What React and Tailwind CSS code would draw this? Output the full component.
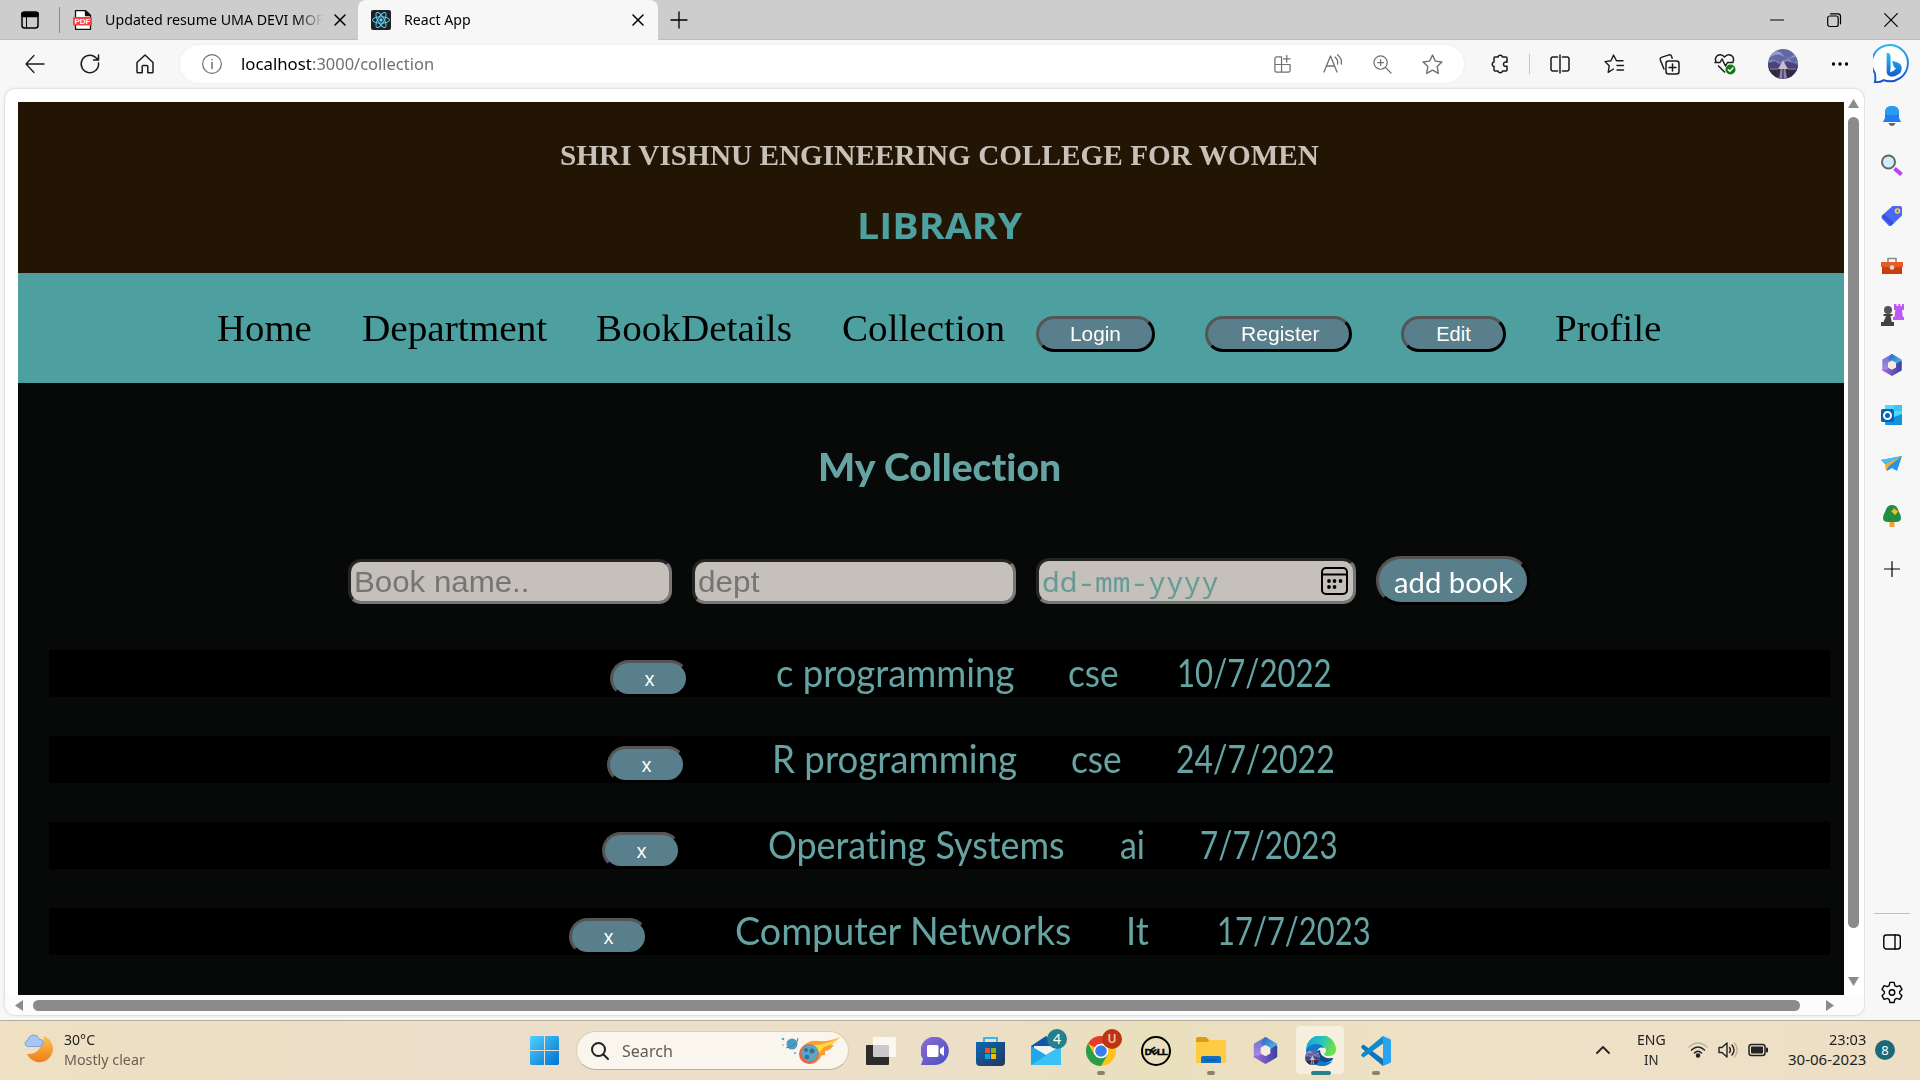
import { useLayoutEffect, useRef } from "react";

/* One line of text set to an exact measure. */
function Fit({ w, className = "", children }) {
  const ref = useRef(null);
  useLayoutEffect(() => {
    const el = ref.current;
    const natural = el.offsetWidth;
    if (natural) el.style.transform = `scaleX(${w / natural})`;
  }, [w, children]);
  return (
    <span className={"block shrink-0 whitespace-pre " + className} style={{ width: w }}>
      <span ref={ref} className="inline-block origin-left">{children}</span>
    </span>
  );
}

function Icon({ size = 24, box = 24, className = "", sw = 1.3, children }) {
  return (
    <svg width={size} height={size} viewBox={`0 0 ${box} ${box}`} fill="none" stroke="currentColor" strokeWidth={sw} strokeLinecap="round" strokeLinejoin="round" className={"block shrink-0 overflow-visible " + className}>
      {children}
    </svg>
  );
}

const seg = "font-['Noto_Sans','Open_Sans',sans-serif]";
const gill = "font-['Lato',sans-serif] [font-variant-ligatures:none]";

function CloseX() {
  return <Icon size={12} box={12} sw={1.5}><path d="M1 1l10 10M11 1L1 11" /></Icon>;
}

function TabStrip() {
  return (
    <div className={"flex h-10 items-center border-b border-[#bdbdbd] bg-[#cdcdcd] text-[15px] text-black " + seg}>
      <Icon size={20} box={20} sw={1.5} className="ml-5"><rect x="2" y="2" width="16" height="16" rx="2.5" /><path d="M2 3h16v3.5H2z" fill="currentColor" /><path d="M6.5 6v12" strokeWidth="1" /></Icon>
      <div className="ml-[19px] h-[26px] w-px bg-[#888]" />
      <Icon size={20} box={20} sw={1.3} className="ml-[13px]">
        <path d="M2.5.7h10L17.500 5.500v13.800h-15z" fill="#fff" stroke="#111" /><path d="M12.500.7V5.500h5z" fill="#111" stroke="#111" />
        <rect x="0" y="7" width="19" height="8.500" rx="1" fill="#f54242" stroke="none" />
        <text x="1.500" y="14" textLength="16" lengthAdjust="spacingAndGlyphs" fill="#fff" stroke="none" fontSize="7.500" fontWeight="700" fontFamily="Liberation Sans">PDF</text>
      </Icon>
      <div className="ml-3 w-[218px] overflow-hidden [mask-image:linear-gradient(90deg,#000_88%,transparent)]"><Fit w={218}>Updated resume UMA DEVI MOF</Fit></div>
      <div className="ml-[11px]"><CloseX /></div>
      <div className="ml-3 flex h-10 w-[300px] items-center rounded-t-lg bg-[#f7f7f7]">
        <svg width="20" height="20" viewBox="0 0 20 20" className="ml-[13px]">
          <rect width="20" height="20" rx="2" fill="#1e2227" />
          <g fill="none" stroke="#5ed3f3" strokeWidth="1"><ellipse cx="10" cy="10" rx="8.500" ry="3.200" /><ellipse cx="10" cy="10" rx="8.500" ry="3.200" transform="rotate(60 10 10)" /><ellipse cx="10" cy="10" rx="8.500" ry="3.200" transform="rotate(120 10 10)" /></g>
          <circle cx="10" cy="10" r="1.700" fill="#5ed3f3" />
        </svg>
        <Fit w={67} className="ml-[13px]">React App</Fit>
        <div className="ml-auto mr-[14px]"><CloseX /></div>
      </div>
      <Icon size={18} box={18} sw={1.3} className="ml-3"><path d="M9 1v16M1 9h16" /></Icon>
      <div className="ml-auto mr-[22px] flex items-center">
        <Icon size={14} box={14} sw={1.2}><path d="M.5 7h13" /></Icon>
        <Icon size={14} box={14} sw={1.2} className="ml-[43px]"><rect x=".7" y="3" width="10.500" height="10.500" rx="2" /><path d="M3.500.8h7.500a2.500 2.500 0 0 1 2.500 2.500v7.500" /></Icon>
        <Icon size={14} box={14} sw={1.2} className="ml-[43px]"><path d="M.7.7l12.600 12.600M13.300.7L.7 13.300" /></Icon>
      </div>
    </div>
  );
}

function Avatar({ size }) {
  return (
    <svg width={size} height={size} viewBox="0 0 30 30" className="block shrink-0">
      <defs><clipPath id={"av" + size}><circle cx="15" cy="15" r="15" /></clipPath></defs>
      <g clipPath={`url(#av${size})`}>
        <path fill="#6467a5" d="M0 0h30v30H0z" /><path fill="#9a9bc9" d="M2 5q8-6 13 1t14-3v4q-8 4-14 0T1 9z" /><path fill="#8486ba" d="M0 12q5-3 9 0t8-1 6 1 7-1v3H0z" />
        <path fill="#45467f" d="M0 14l7-2 5 4 7-4 11 4v6H0z" /><path fill="#c9bfce" d="M15 11l2 4 3 5h-10l3-5z" />
        <path fill="#322b49" d="M0 20h30v10H0z" /><path fill="#8d84a8" d="M12.500 20h5l1.500 10h-8z" /><path fill="#6f5f66" d="M2 19h8v2H2zM20 19h8v2h-8z" /><path stroke="#2c2540" d="M7 21v8M23 21v8M15 20v10" />
      </g>
    </svg>
  );
}

function Toolbar() {
  return (
    <div className="flex h-12 items-center bg-[#f7f7f7] text-[#1b1b1b]">
      <Icon size={20} box={20} className="ml-[25px]"><path d="M19 10H1M9 1.500L1 10l8 8.500" /></Icon>
      <Icon size={20} box={20} sw={1.500} className="ml-[35px]"><path d="M18.500 9A8.700 8.700 0 1 1 15.500 3.400L18.500 6M18.500 1v5h-5" /></Icon>
      <Icon size={20} box={20} sw={1.500} className="ml-[35px]"><path d="M2 8.500L10 1l8 7.500V18q0 .8-.8.800h-4.400v-6.300q0-1-1-1H8.200q-1 0-1 1v6.300H2.800Q2 18.800 2 18z" /></Icon>
      <div className="ml-[25px] flex h-[38px] w-[1284px] items-center rounded-full bg-white pl-[22px] pr-[21px] text-[#707070] shadow-[0_0_3px_#e8e8e8]">
        <Icon size={20} box={20} sw={1.200}><circle cx="10" cy="10" r="9.300" /><path d="M10 8.500v6M10 5.500v.3" strokeWidth="1.500" /></Icon>
        <div className={"ml-[19px] flex text-[17px] leading-6 " + seg}>
          <Fit w={71} className="text-black">localhost</Fit><Fit w={122}>:3000/collection</Fit>
        </div>
        <Icon size={19} box={20} className="ml-auto"><path d="M9 2H4Q2 2 2 4v12q0 2 2 2h12q2 0 2-2v-6H2M9 2v16M14.500 .5v7M11 4h7" /></Icon>
        <Icon size={20} box={20} className="ml-[31px]"><path d="M1 18L7.500 2 14 18M3.500 12h8M12 3q3.500 3 2.500 7M14.500.8q5 4 3.800 9.200" /></Icon>
        <Icon size={19} box={20} className="ml-[30px]"><circle cx="8" cy="8" r="7" /><path d="M13 13l6 6M8 5v6M5 8h6" /></Icon>
        <Icon size={21} box={20} className="ml-[30px]"><path d="M10 1l2.700 5.800 6.300.800-4.600 4.400 1.200 6.500L10 15.300 4.400 18.500l1.200-6.500L1 7.600l6.300-.8z" /></Icon>
      </div>
      <Icon size={20} box={20} sw={1.500} className="ml-[26px]"><path d="M8 3a2.300 2.300 0 0 1 4.500 0H16q1 0 1 1v4.200q-3.500-.700-3.500 2t3.500 2V16q0 1-1 1h-3.500a2.300 2.300 0 0 1-4.500 0H5q-1 0-1-1v-3.500a2.300 2.300 0 0 1 0-4.500V4q0-1 1-1z" /></Icon>
      <div className="ml-[19px] h-5 w-px bg-[#c6c6c6]" />
      <Icon size={20} box={20} sw={1.500} className="ml-5"><path d="M7.500 3H3Q1 3 1 5v10q0 2 2 2h4.500M12.500 3H17q2 0 2 2v10q0 2-2 2h-4.500M10 1v18" /></Icon>
      <Icon size={20} box={20} sw={1.400} className="ml-[34px]"><path d="M19 6.800h-6.500L9.500 1 7 6.800 1 7.600l4.200 4.200-1 6.500L9.500 15M13 11.500h6.500M13 16h6.500" /></Icon>
      <Icon size={21} box={21} sw={1.500} className="ml-[35px]"><rect x="7" y="7" width="13" height="13" rx="2.500" /><path d="M13.500 10v7M10 13.500h7M5 15L1.300 6q-.5-2 1-2.600L10 .9q2-.5 2.600 1.500l.6 1.800" /></Icon>
      <Icon size={22} box={22} sw={1.500} className="ml-[34px]"><path d="M2 9Q.3 5 3.500 2.500 7.500.3 10.500 4 13.500.3 17.500 2.500 20.700 5 19 9M1 9.500h5l2-3.500 3.500 7 2-3.500H19M4.500 13l6 6" /><circle cx="16.500" cy="16.500" r="5" fill="#107c10" stroke="none" /><path d="M14.300 16.700l1.600 1.500 3-3.300" stroke="#fff" /></Icon>
      <div className="ml-[32px]"><Avatar size={30} /></div>
      <svg width="18" height="4" className="ml-[33px]"><circle cx="2.500" cy="2" r="1.700" /><circle cx="9" cy="2" r="1.700" /><circle cx="15.500" cy="2" r="1.700" /></svg>
      <svg width="39" height="40" viewBox="0 0 40 40" className="ml-[24px]">
        <defs><linearGradient id="bg1" x1="0" y1="0" x2="0" y2="1"><stop stopColor="#2ab4f3" /><stop offset="1" stopColor="#174ec9" /></linearGradient><linearGradient id="bg2" x1="0" y1="0" x2="0" y2="1"><stop stopColor="#25c3ee" /><stop offset="1" stopColor="#1558d6" /></linearGradient></defs>
        <path d="M2 38.500q.8-3 0-9A18.500 18.500 0 1 1 11 36.500q-4 2.500-9 2z" fill="#fff" stroke="url(#bg1)" strokeWidth="2" />
        <path d="M14 8.500q4 0 4 4v12l-.5 4q3-.5 6-4l-2-1.500-2-6q8 1 9.500 5 1.500 5-2 8-4 3-8 3-5-1-5-5z" fill="url(#bg2)" />
      </svg>
    </div>
  );
}

function M365({ size }) {
  return (
    <svg width={size} height={size} viewBox="0 0 24 24" strokeWidth="2" strokeLinejoin="round">
      <defs>
        <linearGradient id="m1" x1="0" y1="0" x2="0" y2="1"><stop stopColor="#6d72cf" /><stop offset="1" stopColor="#b48be6" /></linearGradient>
        <linearGradient id="m2" x1="0" y1="0" x2="1" y2="1"><stop stopColor="#2f68c0" /><stop offset="1" stopColor="#56c6f5" /></linearGradient>
        <linearGradient id="m3" x1="0" y1="0" x2="1" y2="0"><stop stopColor="#9c6fd8" /><stop offset="1" stopColor="#3c41a5" /></linearGradient>
      </defs>
      <path d="M12 2L3.300 7v10l5 1.500V9.500l3.700-2.300z" fill="url(#m1)" stroke="url(#m1)" />
      <path d="M12 2l8.700 5v6L16 11V9.500L9.500 6z" fill="url(#m2)" stroke="url(#m2)" />
      <path d="M20.700 9v8L12 22l-8.700-5q4 1 5.500-1l3.200 1 4-2.500V12z" fill="url(#m3)" stroke="url(#m3)" />
      <path d="M12 7.500l4 2.300v4.600l-4 2.300-4-2.300V9.800z" fill="#f3ecdf" stroke="none" />
    </svg>
  );
}

function SideBar() {
  return (
    <aside className="flex w-[55px] shrink-0 flex-col items-center bg-[#f7f7f7] pt-[16px] pr-px text-black">
      <svg width="24" height="24" viewBox="0 0 24 24"><path d="M12 2q7 0 7 7v5l2 4H3l2-4V9q0-7 7-7z" fill="#1f7df0" /><path d="M12 2q7 0 7 7v2H5V9q0-7 7-7z" fill="#2a9af0" /><path d="M8.500 19h7q-1 3-3.500 3t-3.500-3z" fill="#666" /></svg>
      <svg width="24" height="24" viewBox="0 0 24 24" className="mt-[25px]"><path d="M14.500 15.500l7 6" stroke="#c03df0" strokeWidth="4" /><circle cx="8.500" cy="9" r="6.500" fill="#cdeefd" stroke="#666" strokeWidth="2" /></svg>
      <svg width="24" height="24" viewBox="0 0 24 24" className="mt-[27px]"><path d="M12.500 2H20q2 0 2 2v7.500L11.500 21.500q-1.500 1-3 0L2 14.500q-1-1.500 0-3z" fill="#4868f5" /><path d="M2 13l9 8.500 3-2.500L4 10z" fill="#343fd6" opacity=".6" /><circle cx="17.500" cy="7" r="2" fill="#5574f7" stroke="#ffd43b" strokeWidth="1.600" /></svg>
      <svg width="24" height="24" viewBox="0 0 24 24" className="mt-[26px]"><path d="M8 8V4.500h8V8" fill="none" stroke="#8a8a8a" strokeWidth="1.600" /><path d="M1 8h22v5H1z" fill="#ea5a24" /><path d="M2 13h20v7H2z" fill="#c93d12" /><circle cx="12" cy="13.500" r="2.300" fill="#ddd" /></svg>
      <svg width="24" height="24" viewBox="0 0 24 24" className="mt-[25px]"><path d="M14 1h2.500v2h1.800V1h2v2H22V1h2v6h-2l.8 7H24v3H13v-3h1.500l.8-7H14z" fill="#bd5af5" /><circle cx="8" cy="7" r="4" fill="#555" /><path d="M3.500 11h9v2h-2l1.300 6H14v4H1v-4h2.500L6 13H3.500z" fill="#424242" /></svg>
      <div className="mt-[26px]"><M365 size={24} /></div>
      <svg width="24" height="24" viewBox="0 0 24 24" className="mt-[26px]"><path d="M5 2h17v20H5z" fill="#28a8ea" /><path d="M5 2h9v6H5zM14 8h8v6h-8z" fill="#50d9ff" /><path d="M14 2h8v6h-8z" fill="#3cc4f5" /><path d="M6 22v-3l8-5 8-3v11z" fill="#1490df" /><rect x="1" y="6" width="13" height="13" rx="1.500" fill="#0364b8" /><circle cx="7.500" cy="12.500" r="3.500" fill="none" stroke="#fff" strokeWidth="2" /></svg>
      <svg width="24" height="24" viewBox="0 0 24 24" className="mt-[26px]"><path d="M1 7l21-4-5 15-5-3-5 3-2-7z" fill="#2494ed" /><path d="M22 3L5 11l1 7 3-5z" fill="#f8ad25" /><path d="M1 7l21-4L5.500 11z" fill="#45bff5" /></svg>
      <svg width="24" height="24" viewBox="0 0 24 24" className="mt-[27px]"><path d="M9.500 16h5v7h-5z" fill="#efa42c" /><path d="M12 1q5 0 6.500 6 2.500 4 2.500 7 0 4-5 4H8q-5 0-5-4 0-3 2.500-7Q7 1 12 1z" fill="#238c43" /><path d="M14 4l2 2 2 1-1 2-2 2-2-2-2-2 2-1z" fill="#f7be22" /></svg>
      <Icon size={16} box={16} sw={1.200} className="mt-[33px]"><path d="M8 .5v15M.5 8h15" /></Icon>
      <div className="mt-auto h-px w-9 bg-[#c2c2c2]" />
      <Icon size={18} box={18} sw={1.400} className="mt-[19px]"><rect x=".8" y="2" width="16.500" height="14" rx="2.500" /><path d="M12 2v14" /></Icon>
      <Icon size={22} box={24} sw={1.500} className="mt-[30px] mb-[17px]"><path d="M9.700 1.500h4.600l.8 3.500 2 1.200 3.500-1.100 2.300 4-2.600 2.500v1.900l2.600 2.500-2.300 4-3.500-1.100-2 1.200-.8 3.400H9.700l-.8-3.400-2-1.200L3.400 20l-2.300-4 2.600-2.500v-1.900L1.100 9.100l2.300-4 3.500 1.100 2-1.200z" /><circle cx="12" cy="12.500" r="3" /></Icon>
    </aside>
  );
}

function PillButton({ className, children }) {
  return <button className={"flex shrink-0 items-center justify-center rounded-full border-[3px] border-t-[#555] border-l-[#555] border-r-black border-b-black bg-[#587f8b] text-white " + className}>{children}</button>;
}

const rows = [
  { x: 561, gap: 87, name: ["c programming", 238], dept: [54, "cse", 51], date: [58, "10/7/2022", 155] },
  { x: 558, gap: 86, name: ["R programming", 245], dept: [54, "cse", 51], date: [54, "24/7/2022", 159] },
  { x: 553, gap: 87, name: ["Operating Systems", 297], dept: [55, "ai", 25], date: [55, "7/7/2023", 138] },
  { x: 520, gap: 87, name: ["Computer Networks", 336], dept: [55, "It", 23], date: [68, "17/7/2023", 154] },
];

function Page() {
  return (
    <div className="ml-[13px] flex h-[893px] w-[1826px] flex-col bg-[#070908]">
      <header className="flex h-[171px] flex-col items-center bg-[#231504] pl-4">
        <Fit w={759} className="mt-[35px] font-['Liberation_Serif',serif] text-[28.8px] leading-9 font-bold text-[#c8c1ba]">SHRI VISHNU ENGINEERING COLLEGE FOR WOMEN</Fit>
        <Fit w={165} className="mt-[28px] font-['Open_Sans',sans-serif] text-[36.5px] leading-[48px] font-bold text-[#4e9f9f]">LIBRARY</Fit>
      </header>
      <nav className="flex h-[110px] items-start bg-[#4e9f9f] pl-[199px] pt-[33px] font-['Liberation_Serif',serif] text-[38.4px] leading-[44px] text-black">
        <Fit w={95}>Home</Fit>
        <Fit w={185} className="ml-[50px]">Department</Fit>
        <Fit w={196} className="ml-[49px]">BookDetails</Fit>
        <Fit w={163} className="ml-[50px]">Collection</Fit>
        <PillButton className="mt-[10px] ml-[31px] h-9 w-[119px] pr-[2px] font-['Liberation_Sans',sans-serif] text-[20px]"><Fit w={51}>Login</Fit></PillButton>
        <PillButton className="mt-[10px] ml-[50px] h-9 w-[147px] font-['Liberation_Sans',sans-serif] text-[20px]"><Fit w={78}>Register</Fit></PillButton>
        <PillButton className="mt-[10px] ml-[49px] h-9 w-[105px] font-['Liberation_Sans',sans-serif] text-[20px]">Edit</PillButton>
        <Fit w={107} className="ml-[49px]">Profile</Fit>
      </nav>
      <main className={"flex flex-col text-[#66a3a3] " + gill}>
        <div className="mt-[60px] flex justify-center pl-4 text-[37px] leading-[48px] font-black"><Fit w={243}>My Collection</Fit></div>
        <form className="mt-[65px] ml-[330px] flex h-12 items-end font-['Liberation_Sans',sans-serif] text-[30px] leading-[40px] text-[#757575]">
          <div className="h-[45px] w-[324px] rounded-[13px] border-[3px] border-t-[#252525] border-l-[#252525] border-r-[#767676] border-b-[#767676] bg-[#c5c0b9] pl-[3px]"><Fit w={175}>Book name..</Fit></div>
          <div className="ml-5 h-[45px] w-[324px] rounded-[13px] border-[3px] border-t-[#252525] border-l-[#252525] border-r-[#767676] border-b-[#767676] bg-[#c5c0b9] pl-[3px]"><Fit w={61}>dept</Fit></div>
          <div className="ml-5 flex h-[46px] w-[320px] items-center justify-between rounded-[13px] border-[3px] border-t-[#252525] border-l-[#252525] border-r-[#767676] border-b-[#767676] bg-[#c5c0b9] pr-[5px] pl-[3px]">
            <Fit w={177} className="font-['Noto_Sans_Mono','DejaVu_Sans_Mono',monospace] text-[28px] text-[#669b99]">dd-mm-yyyy</Fit>
            <svg width="27" height="28" viewBox="0 0 27 28" fill="none" stroke="#000" strokeWidth="2" className="-mt-px"><rect x="1" y="1" width="25" height="26" rx="4" /><path d="M1 7.500h25" /><g fill="#000" stroke="none"><circle cx="8" cy="14" r="1.900" /><circle cx="13.500" cy="14" r="1.900" /><circle cx="19.500" cy="14" r="1.900" /><circle cx="8" cy="20" r="1.900" /><circle cx="13.500" cy="20" r="1.900" /></g></svg>
          </div>
          <PillButton className="ml-5 -mb-px h-[49px] w-[154px] font-['Lato',sans-serif] text-[29px]"><Fit w={119} className="mt-[2px]">add book</Fit></PillButton>
        </form>
        <ul className="mt-[46px] ml-[31px] flex flex-col gap-[39px]">
          {rows.map((r) => (
            <li key={r.name[0]} className="flex h-[47px] w-[1781px] bg-black text-[38px] leading-[44px]">
              <div className="shrink-0" style={{ width: r.x }} />
              <PillButton className="mt-[10px] h-[37px] w-[79px] font-['Noto_Sans',sans-serif] text-[19px]">x</PillButton>
              <div className="shrink-0" style={{ width: r.gap }} />
              <Fit w={r.name[1]}>{r.name[0]}</Fit>
              <div className="shrink-0" style={{ width: r.dept[0] }} />
              <Fit w={r.dept[2]}>{r.dept[1]}</Fit>
              <div className="shrink-0" style={{ width: r.date[0] }} />
              <Fit w={r.date[2]}>{r.date[1]}</Fit>
            </li>
          ))}
        </ul>
      </main>
    </div>
  );
}

function Slot({ mark = "", badge, children }) {
  return (
    <div className="relative flex h-[59px] w-[55px] shrink-0 items-center justify-center">
      {children}
      {badge}
      {mark && <span className={"absolute bottom-[5px] h-1 rounded-full " + mark} />}
    </div>
  );
}

function Chrome() {
  return (
    <svg width="30" height="30" viewBox="0 0 30 30"><circle cx="15" cy="15" r="15" fill="#fcc31e" /><path d="M15 15L2 7.500A15 15 0 0 1 28 7.500H15z" fill="#e33b2e" /><path d="M2 7.500A15 15 0 0 0 15 30l6.500-11.200L15 15 8.500 18.700z" fill="#2a9d4a" /><circle cx="15" cy="15" r="7.300" fill="#fff" /><circle cx="15" cy="15" r="5.800" fill="#3a7df0" /></svg>
  );
}

function Edge() {
  return (
    <svg width="30" height="30" viewBox="0 0 30 30">
      <defs><linearGradient id="eg" x1="0" y1="0" x2="1" y2=".3"><stop stopColor="#159fdf" /><stop offset=".55" stopColor="#27c3c0" /><stop offset="1" stopColor="#6be04a" /></linearGradient></defs>
      <path d="M0 15A15 15 0 0 1 30 13q0 7-7 7-5 0-5-2 2-1 2-4-1-5-7-5Q3 9 0 15z" fill="url(#eg)" />
      <path d="M0 15q2-7 10-7 6 0 9 4-7-2-8 4-1 8 8 10 5 1 8-1-6 6-13 5Q0 28 0 15z" fill="#1179cc" />
      <path d="M11 15q-3 9 7 11 6 1 9-3 1-1-1-1-8 1-11-4-1-2-1-4z" fill="#0d4f96" />
    </svg>
  );
}

function Taskbar() {
  return (
    <footer className={"flex h-[60px] items-center border-t border-[#b8ad9c] bg-[linear-gradient(90deg,#eee0c1,#ecdec9_25%,#ecdfc7_50%,#eadfbd_60%,#efe1c7_80%,#eddfc5)] text-[15px] leading-5 text-[#222] " + seg}>
      <svg width="30" height="30" viewBox="0 0 30 30" className="-mt-[3px] ml-[24px]"><defs><linearGradient id="mn" x1="0" y1="0" x2="0" y2="1"><stop stopColor="#f9c54e" /><stop offset="1" stopColor="#ef7d1a" /></linearGradient></defs><path d="M20 2a13.500 13.500 0 1 1-17 18q14 1 17-18z" fill="url(#mn)" /><path d="M4 12.500Q1 12 1 9.500T4 6q1-5 6-5 4 0 5 4 4 0 4 4 0 3.500-4 3.500z" fill="#a9c5f0" stroke="#7fa3dc" /></svg>
      <div className="-mt-[4px] ml-[10px] w-[90px]"><Fit w={31}>30°C</Fit><Fit w={81} className="text-[#666055]">Mostly clear</Fit></div>
      <svg width="29" height="29" viewBox="0 0 29 29" className="ml-[376px]"><defs><linearGradient id="wn" x1="0" y1="0" x2="1" y2="1"><stop stopColor="#4fd2ff" /><stop offset="1" stopColor="#0070d0" /></linearGradient></defs><path d="M1 0h13v14H0V1zM15 0h13l1 1v13H15zM0 15h14v14H1l-1-1zM15 15h14v13l-1 1H15z" fill="url(#wn)" /></svg>
      <div className="ml-[17px] flex h-[39px] w-[273px] items-center rounded-full border border-[#dccfb9] border-b-[#bdb09d] bg-[#faf5ed] pr-[7px] pl-[14px] text-[17px]">
        <Icon size={18} box={18} sw={2}><circle cx="7.500" cy="7.500" r="6.500" /><path d="M12.500 12.500l4.500 4.500" /></Icon>
        <Fit w={51} className="ml-[13px] text-[#5e5a55]">Search</Fit>
        <svg width="60" height="28" viewBox="0 0 60 28" className="ml-auto">
          <circle cx="11" cy="7" r="5.500" fill="#4c9bc0" /><path d="M5 11q12-3 12-10" stroke="#3787ad" fill="none" /><circle cx="2" cy="2" r="1.300" fill="#57a9cf" /><circle cx="14" cy="16" r="1" fill="#57a9cf" /><circle cx="2" cy="8" r=".8" fill="#57a9cf" />
          <path d="M22 9q6-6 15-5 12 1 22-4-7 7-10 8h4q-5 6-9 6v4h-3Q37 27 28 27z" fill="#ff9c2e" /><path d="M32 8q13 0 27-8-8 8-16 10l-5 6z" fill="#ffd93f" /><circle cx="28" cy="17" r="10" fill="#f0623d" /><circle cx="29" cy="16" r="8.500" fill="#59a5c6" /><circle cx="25" cy="13" r="2" fill="#386f91" /><circle cx="31" cy="14" r="2.500" fill="#386f91" /><circle cx="26" cy="20" r="2.300" fill="#386f91" />
        </svg>
      </div>
      <div className="ml-[4px] flex">
        <Slot><svg width="30" height="28" viewBox="0 0 30 28"><rect y="8" width="23" height="20" rx="1" fill="#2b2b2b" /><rect x="7" y="0" width="23" height="20" rx="1" fill="#fff" opacity=".75" /></svg></Slot>
        <Slot><svg width="29" height="28" viewBox="0 0 29 28"><defs><linearGradient id="ch" x1="0" y1="0" x2="1" y2="1"><stop stopColor="#916dd0" /><stop offset="1" stopColor="#464fc5" /></linearGradient></defs><path d="M0 28l2-6A14.200 14.200 0 1 1 14.500 28z" fill="url(#ch)" /><path d="M6 9.500q0-1.500 1.500-1.500H16q1.500 0 1.500 1.500v9q0 1.500-1.500 1.500H7.500Q6 20 6 18.500zM19 12l4-3v10l-4-3z" fill="#fff" /></svg></Slot>
        <Slot><svg width="29" height="30" viewBox="0 0 29 30"><defs><linearGradient id="st" x1="0" y1="0" x2="1" y2="1"><stop stopColor="#0b69b5" /><stop offset="1" stopColor="#24345f" /></linearGradient></defs><path d="M8 7V2h13v5" fill="none" stroke="#37b7ea" strokeWidth="2" /><path d="M0 6h29v20q0 4-4 4H4q-4 0-4-4z" fill="url(#st)" /><path fill="#f25022" d="M9 12h5v5H9z" /><path fill="#7fba00" d="M15 12h5v5h-5z" /><path fill="#00a4ef" d="M9 18h5v5H9z" /><path fill="#ffb900" d="M15 18h5v5h-5z" /></svg></Slot>
        <Slot badge={<span className="absolute top-[8px] left-[29px] flex size-5 items-center justify-center rounded-full bg-[#257f8d] text-[14px] text-white">4</span>}><svg width="30" height="29" viewBox="0 0 30 29"><path d="M0 10L15 0l15 10v5H0z" fill="#0f57a8" /><path d="M3 10h24v9H3z" fill="#f2f2f2" /><path d="M0 10l15 9 15-9v19H0z" fill="#1ea7ea" /><path d="M0 29l30-19v19z" fill="#3cc1f5" /></svg></Slot>
        <Slot mark="w-2 bg-[#8a8172]" badge={<span className="absolute top-[8px] left-[29px] flex size-5 items-center justify-center rounded-full bg-[#bd3410] text-[12px] font-semibold text-[#f3c6b8]">U</span>}><Chrome /></Slot>
        <Slot><svg width="30" height="30" viewBox="0 0 30 30"><circle cx="15" cy="15" r="14" fill="none" stroke="#000" strokeWidth="2" /><g fontFamily="Liberation Sans" fontWeight="700" fontSize="9.500" stroke="#000" strokeWidth=".5"><text x="3.700" y="18.500">D</text><text x="10" y="18.500" transform="rotate(-35 13 15)">E</text><text x="16" y="18.500">L</text><text x="21" y="18.500">L</text></g></svg></Slot>
        <Slot mark="w-2 bg-[#8a8172]"><svg width="30" height="27" viewBox="0 0 30 27"><path d="M0 2q0-2 2-2h8l3 3v5H0z" fill="#dd9b08" /><path d="M0 5h11l3-2h14q2 0 2 2v20q0 1-1 1H0z" fill="#fdcc42" /><path d="M5 26v-5q0-2 2-2h16q2 0 2 2v5z" fill="#1370c4" /><path d="M9 23h12" stroke="#0b4e93" /></svg></Slot>
        <Slot><M365 size={29} /></Slot>
        <div className="my-[5px] -mr-[3px] ml-[3px] flex h-12 w-12 rounded bg-[#f6efde]"><div className="-my-[5px] -ml-[3px]"><Slot mark="w-5 bg-[#28808d]" badge={<span className="absolute bottom-[15px] left-[12px]"><Avatar size={15} /></span>}><Edge /></Slot></div></div>
        <div className="ml-[7px]"><Slot mark="w-2 bg-[#8a8172]"><svg width="30" height="30" viewBox="0 0 30 30"><path d="M0 10.500L2.500 8.500 22 23v7L1 12.500z" fill="#0877bd" /><path d="M0 19.500l2.500 2L22 7.500V0L1 17.500z" fill="#0d8ad0" /><path d="M22 0l7 3q1 .5 1 1.500v21q0 1-1 1.500l-7 3z" fill="#2ba3ef" /></svg></Slot></div>
      </div>
      <div className="-mt-px ml-auto flex items-center">
        <Icon size={14} box={14} sw={1.800}><path d="M1 10l6-6 6 6" /></Icon>
        <div className="-mt-[2px] ml-[26px] flex w-[30px] flex-col items-center"><Fit w={29}>ENG</Fit><Fit w={15}>IN</Fit></div>
        <Icon size={20} box={20} sw={1.500} className="ml-[22px]"><path d="M1 7q9-8 18 0" opacity=".25" /><path d="M3.500 10q6.500-6 13 0M6.500 13q3.500-3.500 7 0" /><circle cx="10" cy="15.500" r="1.500" fill="currentColor" /></Icon>
        <Icon size={20} box={20} sw={1.400} className="ml-[10px]"><path d="M1 7.500h3L9 3v14l-5-4.500H1zM11.500 7.500q2 2.500 0 5M14 5q4 5 0 10" /><path d="M16.500 3q5.500 7 0 14" opacity=".25" /></Icon>
        <Icon size={20} box={20} sw={1.500} className="ml-[10px]"><rect x="1" y="4.500" width="16" height="11" rx="2.500" /><path d="M4 7.500h10v5H4zM19 8.500v3" fill="currentColor" strokeWidth="2" /></Icon>
        <div className="-mt-[3px] ml-[19px] flex w-[79px] flex-col items-end"><Fit w={37}>23:03</Fit><Fit w={78}>30-06-2023</Fit></div>
        <span className="mr-[25px] ml-[9px] flex size-5 items-center justify-center rounded-full bg-[#1b6a79] text-[13px] text-white">8</span>
      </div>
    </footer>
  );
}

export default function App() {
  return (
    <div className="flex h-[1080px] w-[1920px] flex-col overflow-hidden bg-[#f7f7f7]">
      <TabStrip />
      <Toolbar />
      <div className="flex h-[932px]">
        <div className="mt-px ml-[5px] flex h-[926px] w-[1859px] shrink-0 flex-col rounded-[10px] bg-white pt-[13px] shadow-[0_0_3px_#bbb]">
          <div className="flex h-[893px]">
            <Page />
            <div className="-mt-[3px] flex w-[20px] flex-col items-center pr-px text-[#8b8b8b]">
              <svg width="11" height="9"><path d="M5.500 0L11 9H0z" fill="currentColor" /></svg>
              <div className="mt-[9px] h-[811px] w-[11px] rounded-full bg-[#8b8b8b]" />
              <svg width="11" height="9" className="mt-auto mb-[9px]"><path d="M0 0h11L5.500 9z" fill="currentColor" /></svg>
            </div>
          </div>
          <div className="flex h-[20px] items-center rounded-b-[10px] bg-[#fcfcfc] pl-[10px] text-[#8b8b8b]">
            <svg width="8" height="11"><path d="M8 0v11L0 5.500z" fill="currentColor" /></svg>
            <div className="ml-[10px] h-[11px] w-[1767px] rounded-full bg-[#8b8b8b]" />
            <svg width="8" height="11" className="ml-[26px]"><path d="M0 0l8 5.500L0 11z" fill="currentColor" /></svg>
          </div>
        </div>
        <div className="ml-px flex"><SideBar /></div>
      </div>
      <Taskbar />
    </div>
  );
}
